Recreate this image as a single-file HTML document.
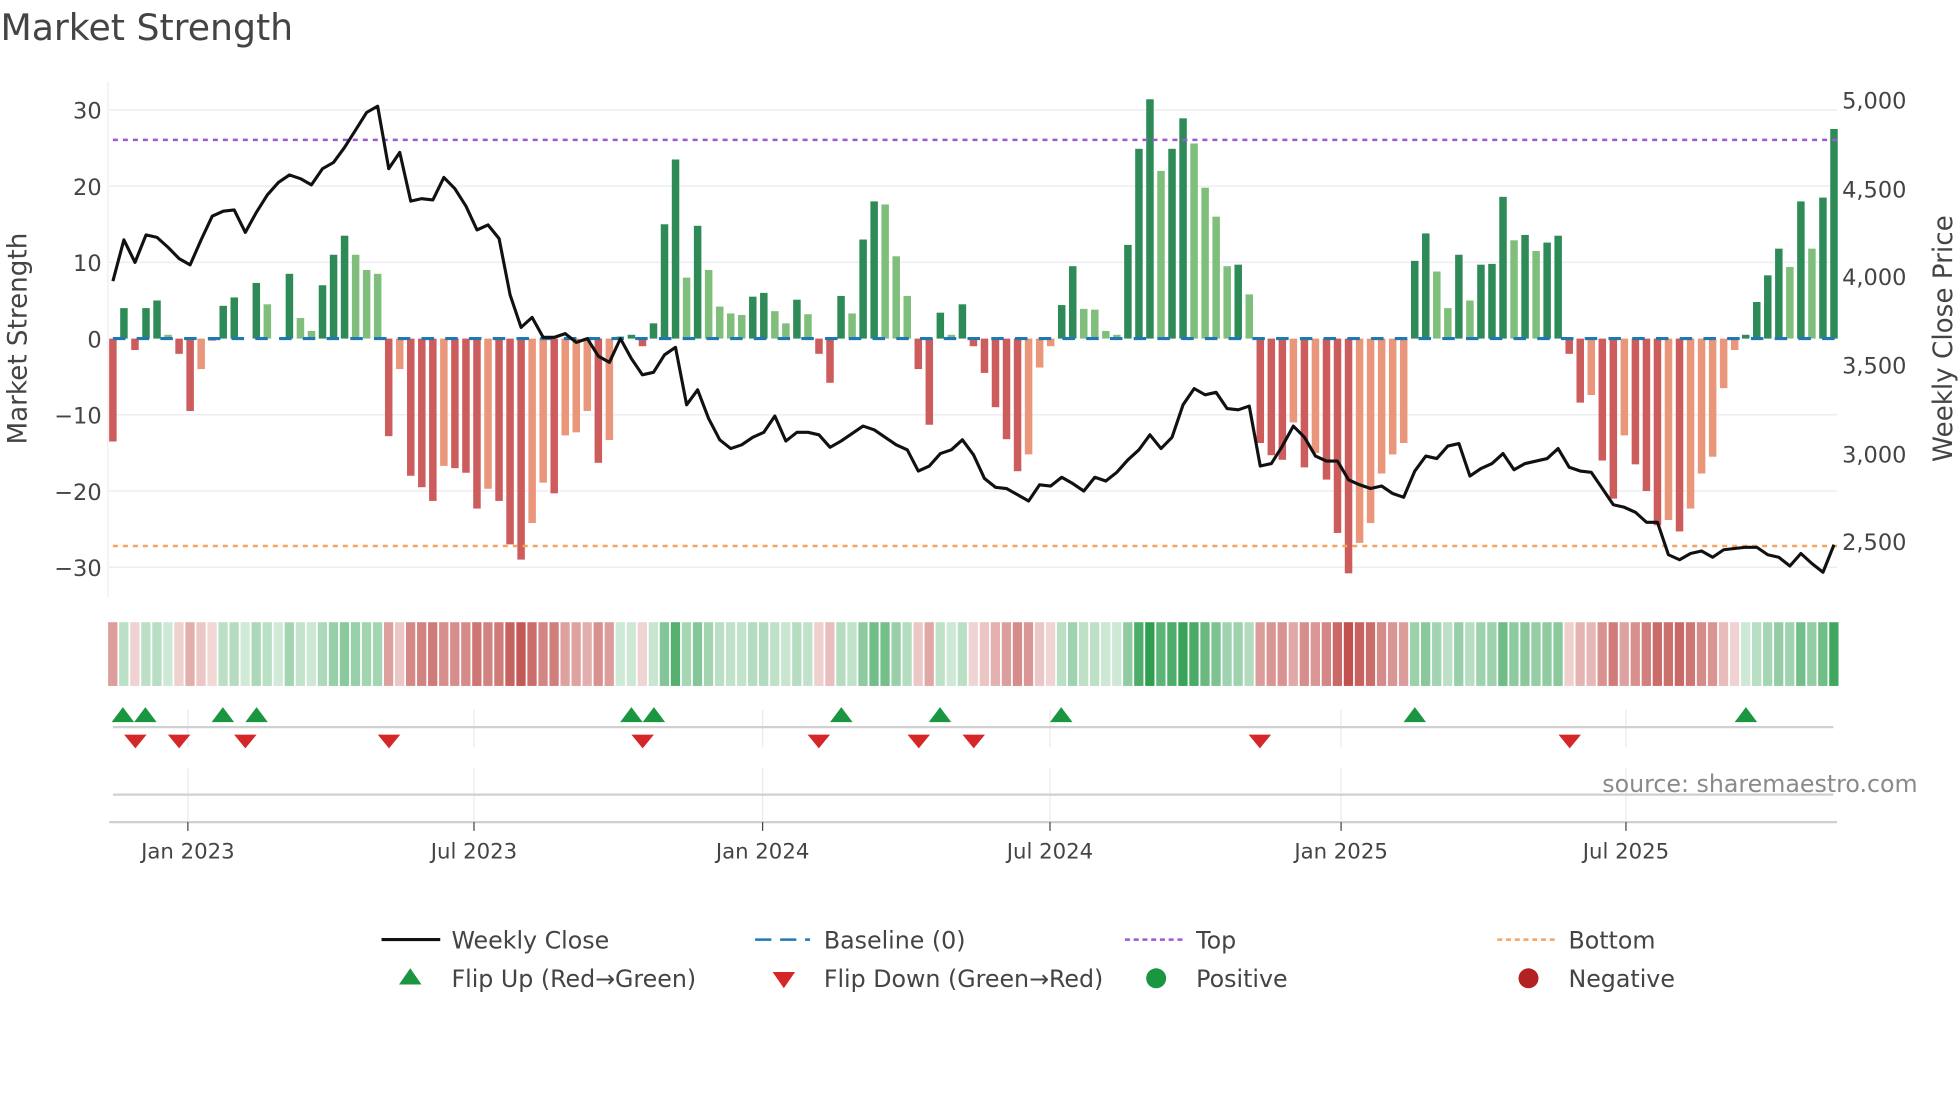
<!DOCTYPE html>
<html><head><meta charset="utf-8"><style>
html,body{margin:0;padding:0;background:#fff;width:1960px;height:1102px;overflow:hidden}
svg{display:block}
text{font-family:"DejaVu Sans","Liberation Sans",sans-serif;fill:#444}
</style></head><body>
<svg id="s" width="1960" height="1102" viewBox="0 0 1568 882" xmlns="http://www.w3.org/2000/svg">
<text x="0" y="32" font-size="29" fill="#333">Market Strength</text>
<g stroke="#eceef3" stroke-width="1.2">
<line x1="87" x2="1470" y1="88" y2="88"/><line x1="87" x2="1470" y1="149" y2="149"/>
<line x1="87" x2="1470" y1="210" y2="210"/><line x1="87" x2="1470" y1="332" y2="332"/>
<line x1="87" x2="1470" y1="393" y2="393"/><line x1="87" x2="1470" y1="454" y2="454"/>
</g>
<line x1="86" x2="86" y1="65" y2="478" stroke="#eceef3"/>
<g font-size="18" text-anchor="end">
<text x="81" y="95">30</text><text x="81" y="156">20</text><text x="81" y="217">10</text>
<text x="81" y="278">0</text><text x="81" y="339">−10</text><text x="81" y="400">−20</text><text x="81" y="461">−30</text>
</g>
<g font-size="18">
<text x="1474" y="87">5,000</text><text x="1474" y="158">4,500</text><text x="1474" y="228">4,000</text>
<text x="1474" y="299">3,500</text><text x="1474" y="370">3,000</text><text x="1474" y="440">2,500</text>
</g>
<text transform="translate(21,271) rotate(-90)" font-size="21" text-anchor="middle">Market Strength</text>
<text transform="translate(1562,271) rotate(-90)" font-size="21" text-anchor="middle">Weekly Close Price</text>
<g id="bars"></g>
<line x1="90" x2="1470" y1="271" y2="271" stroke="#1f77b4" stroke-width="2.5" stroke-dasharray="10 9"/>
<line x1="90" x2="1470" y1="112" y2="112" stroke="#9b59d6" stroke-width="2" stroke-dasharray="4 4"/>
<line x1="90" x2="1470" y1="437" y2="437" stroke="#f4a460" stroke-width="2" stroke-dasharray="4 4"/>
<polyline id="price" fill="none" stroke="#111" stroke-width="2.5" stroke-linejoin="round"/>
<g id="heat"></g>
<g stroke="#e8eaf0" stroke-width="1">
<line x1="150" x2="150" y1="568" y2="598"/><line x1="379" x2="379" y1="568" y2="598"/>
<line x1="610" x2="610" y1="568" y2="598"/><line x1="840" x2="840" y1="568" y2="598"/>
<line x1="1073" x2="1073" y1="568" y2="598"/><line x1="1301" x2="1301" y1="568" y2="598"/>
<line x1="150" x2="150" y1="615" y2="658"/><line x1="379" x2="379" y1="615" y2="658"/>
<line x1="610" x2="610" y1="615" y2="658"/><line x1="840" x2="840" y1="615" y2="658"/>
<line x1="1073" x2="1073" y1="615" y2="658"/><line x1="1301" x2="1301" y1="615" y2="658"/>
</g>
<line x1="90" x2="1467" y1="582" y2="582" stroke="#d0d0d0" stroke-width="1.8"/>
<line x1="90" x2="1467" y1="636" y2="636" stroke="#d0d0d0" stroke-width="1.8"/>
<line x1="87" x2="1470" y1="658" y2="658" stroke="#d0d0d0" stroke-width="1.8"/>
<g stroke="#444" stroke-width="1">
<line x1="150" x2="150" y1="658" y2="665"/><line x1="379" x2="379" y1="658" y2="665"/>
<line x1="610" x2="610" y1="658" y2="665"/><line x1="840" x2="840" y1="658" y2="665"/>
<line x1="1073" x2="1073" y1="658" y2="665"/><line x1="1301" x2="1301" y1="658" y2="665"/>
</g>
<g id="flips"></g>
<text x="1282" y="634" font-size="19" fill="#8a8a8a" style="fill:#8a8a8a">source: sharemaestro.com</text>
<g font-size="17" text-anchor="middle">
<text x="150" y="687">Jan 2023</text><text x="379" y="687">Jul 2023</text><text x="610" y="687">Jan 2024</text>
<text x="840" y="687">Jul 2024</text><text x="1073" y="687">Jan 2025</text><text x="1301" y="687">Jul 2025</text>
</g>
<g font-size="19">
<line x1="305" x2="352" y1="752" y2="752" stroke="#111" stroke-width="2.5"/>
<text x="361" y="759">Weekly Close</text>
<line x1="604" x2="648" y1="752" y2="752" stroke="#1f77b4" stroke-width="2" stroke-dasharray="13 7"/>
<text x="659" y="759">Baseline (0)</text>
<line x1="900" x2="946" y1="752" y2="752" stroke="#9b59d6" stroke-width="2" stroke-dasharray="4 3"/>
<text x="957" y="759">Top</text>
<line x1="1198" x2="1244" y1="752" y2="752" stroke="#f4a460" stroke-width="2" stroke-dasharray="4 3"/>
<text x="1255" y="759">Bottom</text>
<polygon points="319,788 337,788 328,775" fill="#1a9641"/>
<text x="361" y="790">Flip Up (Red→Green)</text>
<polygon points="618,778 636,778 627,791" fill="#d62728"/>
<text x="659" y="790">Flip Down (Green→Red)</text>
<circle cx="925" cy="783" r="8" fill="#1a9641"/>
<text x="957" y="790">Positive</text>
<circle cx="1223" cy="783" r="8" fill="#b22222"/>
<text x="1255" y="790">Negative</text>
</g>
</svg>
<script>
var NS="http://www.w3.org/2000/svg";
var d="R-13.5 G4 R-1.5 G4 G5 g0.5 R-2 R-9.5 r-4 r-0.3 G4.3 G5.4 G0 G7.3 g4.5 G0 G8.5 g2.7 g1 G7 G11 G13.5 g11 g9 g8.5 R-12.8 r-4 R-18 R-19.5 R-21.3 r-16.7 R-17 R-17.6 R-22.3 r-19.7 R-21.3 R-27 R-29 r-24.2 r-18.9 R-20.3 r-12.7 r-12.3 r-9.5 R-16.3 r-13.3 g0.3 G0.5 R-1 G2 G15 G23.5 g8 G14.8 g9 g4.2 g3.3 g3.1 G5.5 G6 g3.6 g2 G5.1 g3.2 R-2 R-5.8 G5.6 g3.3 G13 G18 g17.6 g10.8 g5.6 R-4 R-11.3 G3.4 g0.5 G4.5 R-1 R-4.5 R-9 R-13.2 R-17.4 r-15.2 r-3.8 r-1 G4.4 G9.5 g3.9 g3.8 g1 g0.5 G12.3 G24.9 G31.4 g22 G24.9 G28.9 g25.6 g19.8 g16 g9.5 G9.7 g5.8 R-13.7 R-15.3 R-15.9 r-11 R-16.9 r-15 R-18.5 R-25.5 R-30.8 r-26.8 r-24.2 r-17.7 r-15.2 r-13.7 G10.2 G13.8 g8.8 g4 G11 g5 G9.7 G9.8 G18.6 g12.9 G13.6 g11.5 G12.6 G13.5 R-2 R-8.4 r-7.4 R-16 R-21 r-12.7 R-16.5 R-20 R-24.5 r-23.8 R-25.3 r-22.3 r-17.7 r-15.5 r-6.5 r-1.5 G0.5 G4.8 G8.3 G11.8 g9.4 G18 g11.8 G18.5 G27.5".split(" ");
var p=[225,192,210,188,190,198,207,212,192,173,169,168,186,170,156,146,140,143,148,135,130,118,104,90,85,135,122,161,159,160,142,151,165,184,180,191,236,262,254,270,270,267,274,271,285,290,271,287,300,298,284,278,324,312,335,352,359,356,350,346,333,353,346,346,348,358,353,347,341,344,350,356,360,377,373,363,360,352,364,383,390,391,396,401,388,389,382,387,393,382,385,378,368,360,348,359,350,324,311,316,314,327,328,325,373,371,357,341,350,365,369,369,384,388,391,389,395,398,377,365,367,357,355,381,375,371,363,376,371,369,367,359,374,377,378,391,404,406,410,418,418,444,448,443,441,446,440,439,438,438,444,446,453,443,451,458,436];
var n=d.length,step=(1467.5-90)/(n-1);
var cols={G:"#2e8b57",g:"#7fbf7b",R:"#cd5c5c",r:"#e9967a"};
var bars=document.getElementById("bars"),heat=document.getElementById("heat");
function mix(a,b,t){return Math.round(a+(b-a)*t)}
for(var i=0;i<n;i++){
 var t=d[i][0],v=parseFloat(d[i].slice(1)),x=90+i*step;
 if(Math.abs(v)>0.05){var r=document.createElementNS(NS,"rect");var y0=271,y1=271-v*6.1;
 r.setAttribute("x",x-3);r.setAttribute("width",6);r.setAttribute("y",Math.min(y0,y1));r.setAttribute("height",Math.max(1,Math.abs(y1-y0)));r.setAttribute("fill",cols[t]);bars.appendChild(r);}
 var pos=(t=="G"||t=="g"),k=0.22+0.78*Math.min(1,Math.abs(v)/31);
 var base=pos?[46,158,79]:[192,80,77];
 var c="rgb("+mix(255,base[0],k)+","+mix(255,base[1],k)+","+mix(255,base[2],k)+")";
 var h=document.createElementNS(NS,"rect");h.setAttribute("x",x-step/2+0.6);h.setAttribute("width",step-1.4);h.setAttribute("y",498);h.setAttribute("height",51);h.setAttribute("fill",c);heat.appendChild(h);
}
var pts=[];for(var i=0;i<p.length;i++)pts.push((90+i*step).toFixed(1)+","+p[i]);
document.getElementById("price").setAttribute("points",pts.join(" "));
var ups=[98,116,178,205,505,523,673,752,849,1132,1397],dns=[108,143,196,311,514,655,735,779,1008,1256],f=document.getElementById("flips");
ups.forEach(function(x){var q=document.createElementNS(NS,"polygon");q.setAttribute("points",(x-9)+",578 "+(x+9)+",578 "+x+",566");q.setAttribute("fill","#1a9641");f.appendChild(q)});
dns.forEach(function(x){var q=document.createElementNS(NS,"polygon");q.setAttribute("points",(x-9)+",588 "+(x+9)+",588 "+x+",599");q.setAttribute("fill","#d62728");f.appendChild(q)});
</script>
</body></html>
